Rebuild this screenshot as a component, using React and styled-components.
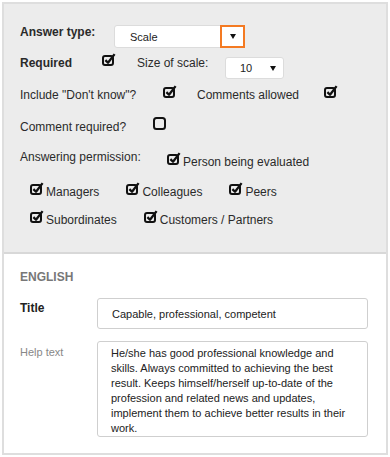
import React from "react";
import styled, { createGlobalStyle } from "styled-components";

const GlobalStyle = createGlobalStyle`
  body {
    margin: 0;
    background: #fff;
    font-family: "Liberation Sans", Arial, sans-serif;
  }
`;

const Panel = styled.div`
  margin: 2px;
  width: 386px;
  box-sizing: border-box;
  border: 2px solid #dedede;
  background: #fff;
`;

const Settings = styled.section`
  height: 250px;
  box-sizing: border-box;
  padding: 20px 16px 0;
  background: #ececec;
  border-bottom: 2px solid #d8d8d8;
`;

const Row = styled.div`
  display: flex;
  align-items: center;
  height: 16px;
  margin-top: ${(p) => p.$mt || 0}px;
  padding-left: ${(p) => p.$indent || 0}px;
  gap: ${(p) => p.$gap || 0}px;
`;

const Label = styled.span`
  flex-shrink: 0;
  width: ${(p) => (p.$w ? `${p.$w}px` : "auto")};
  margin-left: ${(p) => p.$ml || 0}px;
  margin-bottom: ${(p) => p.$raise || 0}px;
  font-size: 12px;
  font-weight: ${(p) => (p.$bold ? 700 : 400)};
  line-height: 16px;
  color: #2a2a2a;
  white-space: nowrap;
`;

const Option = styled.span`
  display: flex;
  align-items: center;
  gap: 2px;
  font-size: 12px;
  line-height: 16px;
  color: #2a2a2a;
  white-space: nowrap;
`;

const Box = styled.svg`
  flex-shrink: 0;
  margin-bottom: 6px;
`;

const Select = styled.div`
  display: flex;
  align-items: center;
  align-self: flex-start;
  box-sizing: border-box;
  width: ${(p) => p.$w}px;
  height: ${(p) => p.$h}px;
  margin-top: ${(p) => p.$mt || 0}px;
  padding-left: ${(p) => p.$pad}px;
  background: #fff;
  border: 1px solid #dcdcdc;
  border-radius: 3px;
  font-size: 11px;
  color: #222;
`;

const SelectValue = styled.span`
  flex: 1;
`;

const Arrow = styled.span`
  display: flex;
  align-items: center;
  justify-content: center;
  box-sizing: border-box;
  width: ${(p) => (p.$focus ? 25 : 20)}px;
  height: ${(p) => (p.$focus ? 23 : 20)}px;
  margin-right: ${(p) => (p.$focus ? -1 : 0)}px;
  border: ${(p) => (p.$focus ? "2px solid #f47a22" : "none")};
`;

const Language = styled.section`
  padding: 16px 16px 16px;
`;

const LangTitle = styled.div`
  font-size: 12px;
  font-weight: 700;
  line-height: 14px;
  color: #777;
`;

const Field = styled.div`
  display: flex;
  align-items: flex-start;
  margin-top: ${(p) => p.$mt}px;
`;

const FieldLabel = styled.label`
  flex-shrink: 0;
  width: 77px;
  padding-top: ${(p) => p.$pt}px;
  font-size: ${(p) => (p.$bold ? 12 : 11)}px;
  font-weight: ${(p) => (p.$bold ? 700 : 400)};
  line-height: 14px;
  color: ${(p) => (p.$bold ? "#222" : "#888")};
`;

const TextInput = styled.input`
  box-sizing: border-box;
  width: 271px;
  height: 31px;
  padding: 0 14px;
  border: 1px solid #cfcfcf;
  border-radius: 3px;
  font-family: "Liberation Sans", Arial, sans-serif;
  font-size: 11px;
  color: #222;
  background: #fff;
  outline: none;
`;

const TextArea = styled.textarea`
  box-sizing: border-box;
  width: 271px;
  height: 96px;
  margin: 0;
  padding: 4px 13px;
  border: 1px solid #cfcfcf;
  border-radius: 3px;
  font-family: "Liberation Sans", Arial, sans-serif;
  font-size: 11px;
  line-height: 15px;
  color: #222;
  background: #fff;
  resize: none;
  overflow: hidden;
  outline: none;
`;

const Check = ({ checked = true }) => (
  <Box width="14" height="14" viewBox="0 0 14 14">
    {checked ? (
      <>
        <rect x="1" y="3" width="10" height="9" rx="2" fill="none" stroke="#111" strokeWidth="2" />
        <path d="M3.4 7.1 L6 9.7 L12.6 1.1" fill="none" stroke="#111" strokeWidth="2.3" strokeLinejoin="round" />
      </>
    ) : (
      <rect x="1" y="1" width="11" height="11" rx="2.5" fill="none" stroke="#111" strokeWidth="2" />
    )}
  </Box>
);

const Triangle = () => (
  <svg width="6" height="5" viewBox="0 0 6 5">
    <polygon points="0,0 6,0 3,5" fill="#111" />
  </svg>
);

const helpText =
  "He/she has good professional knowledge and skills. Always committed to achieving the best result. Keeps himself/herself up-to-date of the profession and related news and updates, implement them to achieve better results in their work.";

export default function App() {
  return (
    <>
      <GlobalStyle />
      <Panel>
        <Settings>
          <Row>
            <Label $w={94} $bold>Answer type:</Label>
            <Select $w={131} $h={23} $mt={1} $pad={15}>
              <SelectValue>Scale</SelectValue>
              <Arrow $focus>
                <Triangle />
              </Arrow>
            </Select>
          </Row>
          <Row $mt={15}>
            <Label $w={82} $bold>Required</Label>
            <Check />
            <Label $w={88} $ml={21}>Size of scale:</Label>
            <Select $w={59} $h={22} $mt={2} $pad={14}>
              <SelectValue>10</SelectValue>
              <Arrow>
                <Triangle />
              </Arrow>
            </Select>
          </Row>
          <Row $mt={16}>
            <Label $w={143}>Include "Don't know"?</Label>
            <Check />
            <Label $w={127} $ml={20}>Comments allowed</Label>
            <Check />
          </Row>
          <Row $mt={16}>
            <Label $w={133}>Comment required?</Label>
            <Check checked={false} />
          </Row>
          <Row $mt={19}>
            <Label $w={147} $raise={10}>Answering permission:</Label>
            <Option>
              <Check />
              Person being evaluated
            </Option>
          </Row>
          <Row $mt={14} $indent={10} $gap={27}>
            <Option>
              <Check />
              Managers
            </Option>
            <Option>
              <Check />
              Colleagues
            </Option>
            <Option>
              <Check />
              Peers
            </Option>
          </Row>
          <Row $mt={12} $indent={10} $gap={27}>
            <Option>
              <Check />
              Subordinates
            </Option>
            <Option>
              <Check />
              Customers / Partners
            </Option>
          </Row>
        </Settings>
        <Language>
          <LangTitle>ENGLISH</LangTitle>
          <Field $mt={14}>
            <FieldLabel $bold $pt={3}>Title</FieldLabel>
            <TextInput readOnly value="Capable, professional, competent" />
          </Field>
          <Field $mt={12}>
            <FieldLabel $pt={4}>Help text</FieldLabel>
            <TextArea readOnly value={helpText} />
          </Field>
        </Language>
      </Panel>
    </>
  );
}
